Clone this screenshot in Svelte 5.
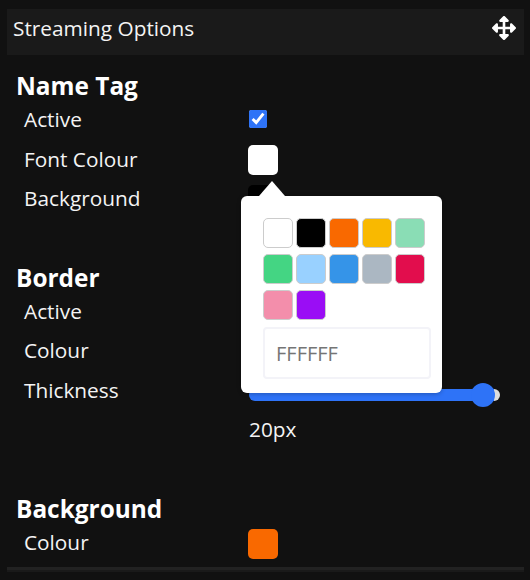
<script>
  const swatches = [
    '#ffffff', '#000000', '#f96900', '#f9b900', '#8addb5', '#44d583',
    '#99d1ff', '#3594e8', '#abb7c2', '#e20d4d', '#f38eab', '#9a0df5'
  ];
  let thickness = 20;
  const fill = 97.8;
</script>

<div class="panel">
  <header class="title">
    <span>Streaming Options</span>
    <svg class="move" viewBox="0 0 512 512" aria-hidden="true">
      <path fill="#fff" d="M352.201 425.775l-79.196 79.196c-9.373 9.373-24.568 9.373-33.941 0l-79.196-79.196c-15.119-15.119-4.411-40.971 16.971-40.97h51.162L228 284H127.196v51.162c0 21.382-25.851 32.09-40.971 16.971L7.029 272.937c-9.373-9.373-9.373-24.569 0-33.941L86.225 159.8c15.119-15.119 40.971-4.411 40.971 16.971V228H228V127.196h-51.23c-21.382 0-32.09-25.851-16.971-40.971l79.196-79.196c9.373-9.373 24.568-9.373 33.941 0l79.196 79.196c15.119 15.119 4.411 40.971-16.971 40.971h-51.162V228h100.804v-51.162c0-21.382 25.851-32.09 40.97-16.971l79.196 79.196c9.373 9.373 9.373 24.569 0 33.941L425.773 352.2c-15.119 15.119-40.971 4.411-40.97-16.971V284H284v100.804h51.23c21.382 0 32.09 25.851 16.971 40.971z"/>
    </svg>
  </header>

  <section class="name-tag">
    <h2>Name Tag</h2>
    <div class="row">
      <span>Active</span>
      <input type="checkbox" checked />
    </div>
    <div class="row">
      <span>Font Colour</span>
      <div class="picker">
        <button class="swatch" style="background: #ffffff" aria-label="Font colour"></button>
        <div class="popover">
          <div class="swatches">
            {#each swatches as c}
              <button class="choice" style="background: {c}" aria-label={c}></button>
            {/each}
          </div>
          <input class="hex" type="text" placeholder="FFFFFF" />
        </div>
      </div>
    </div>
    <div class="row">
      <span>Background</span>
      <button class="swatch" style="background: #000000" aria-label="Background colour"></button>
    </div>
  </section>

  <section class="border">
    <h2>Border</h2>
    <div class="row">
      <span>Active</span>
      <input type="checkbox" checked />
    </div>
    <div class="row">
      <span>Colour</span>
      <button class="swatch" style="background: #ffffff" aria-label="Border colour"></button>
    </div>
    <div class="row">
      <span>Thickness</span>
      <input class="slider" type="range" min="0" max="100" value={fill} style="--fill: {fill}%" />
    </div>
    <div class="row">
      <span></span>
      <span class="value">{thickness}px</span>
    </div>
  </section>

  <section class="background">
    <h2>Background</h2>
    <div class="row">
      <span>Colour</span>
      <button class="swatch" style="background: #f96900" aria-label="Background colour"></button>
    </div>
  </section>

  <div class="rule"></div>
</div>

<style>
  :global(body) {
    background: #111111;
    color: #f4f4f4;
    font-family: "Open Sans", "Noto Sans", sans-serif;
    margin: 0;
  }

  .panel {
    height: 580px;
    overflow: hidden;
    padding: 9px 6px 0 7px;
    box-sizing: border-box;
  }

  .title {
    display: flex;
    align-items: center;
    justify-content: space-between;
    height: 46px;
    box-sizing: border-box;
    padding: 0 8px 9px 6px;
    background: #1a1a1a;
    font-size: 20.8px;
  }

  .move {
    width: 24px;
    height: 24px;
  }

  section {
    padding-left: 9px;
  }

  h2 {
    margin: 0;
    font-size: 24.4px;
    line-height: 29px;
    font-weight: 700;
    color: #fff;
  }

  .name-tag { margin-top: 16px; }
  .border { margin-top: 44px; }
  .background { margin-top: 44px; }

  .row {
    display: grid;
    grid-template-columns: 225px 1fr;
    align-items: center;
    height: 39.5px;
    padding-left: 8px;
    font-size: 20.8px;
  }

  .row > :first-child {
    margin-top: -1px;
  }

  .value {
    margin-top: -2px;
  }

  .swatch {
    display: block;
    width: 30px;
    height: 30px;
    padding: 0;
    border: none;
    border-radius: 5px;
    margin-left: -1px;
    transform: translateY(1px);
  }

  .background .swatch {
    transform: translateY(2px);
  }

  input[type="checkbox"] {
    width: 18px;
    height: 18px;
    margin: -2px 0 0;
    accent-color: #2e73f7;
  }

  .picker {
    position: relative;
  }

  .popover {
    position: absolute;
    z-index: 2;
    left: -8px;
    top: 52px;
    width: 201px;
    height: 197px;
    box-sizing: border-box;
    padding: 22px 11px 0 22px;
    background: #fff;
    border-radius: 6px;
    box-shadow: 0 1px 4px rgba(0, 0, 0, 0.25);
  }

  .popover::before {
    content: '';
    position: absolute;
    left: 18px;
    top: -15px;
    width: 0;
    height: 0;
    border-left: 13px solid transparent;
    border-right: 13px solid transparent;
    border-bottom: 15px solid #fff;
  }

  .swatches {
    display: grid;
    grid-template-columns: repeat(5, 30px);
    grid-auto-rows: 30px;
    column-gap: 3px;
    row-gap: 6px;
  }

  .choice {
    padding: 0;
    border: 1px solid #cccccc;
    border-radius: 5px;
  }

  .hex {
    display: block;
    width: 168px;
    height: 52px;
    box-sizing: border-box;
    margin-top: 7px;
    padding: 0 11px;
    border: 2px solid #f3f3f8;
    border-radius: 4px;
    font: inherit;
    font-size: 20px;
    outline: none;
  }

  .hex::placeholder {
    color: #757575;
    opacity: 1;
  }

  .slider {
    -webkit-appearance: none;
    appearance: none;
    display: block;
    width: 251px;
    height: 12px;
    margin: 9px 0 0;
    border-radius: 6px;
    background: linear-gradient(to right, #2e73f7 var(--fill), #dddddd var(--fill));
  }

  .slider::-webkit-slider-thumb {
    -webkit-appearance: none;
    width: 24px;
    height: 24px;
    border-radius: 50%;
    background: #2e73f7;
  }

  .rule {
    height: 5px;
    margin-top: 5px;
    background: linear-gradient(#222222 60%, #1a1a1a 60%);
  }
</style>
